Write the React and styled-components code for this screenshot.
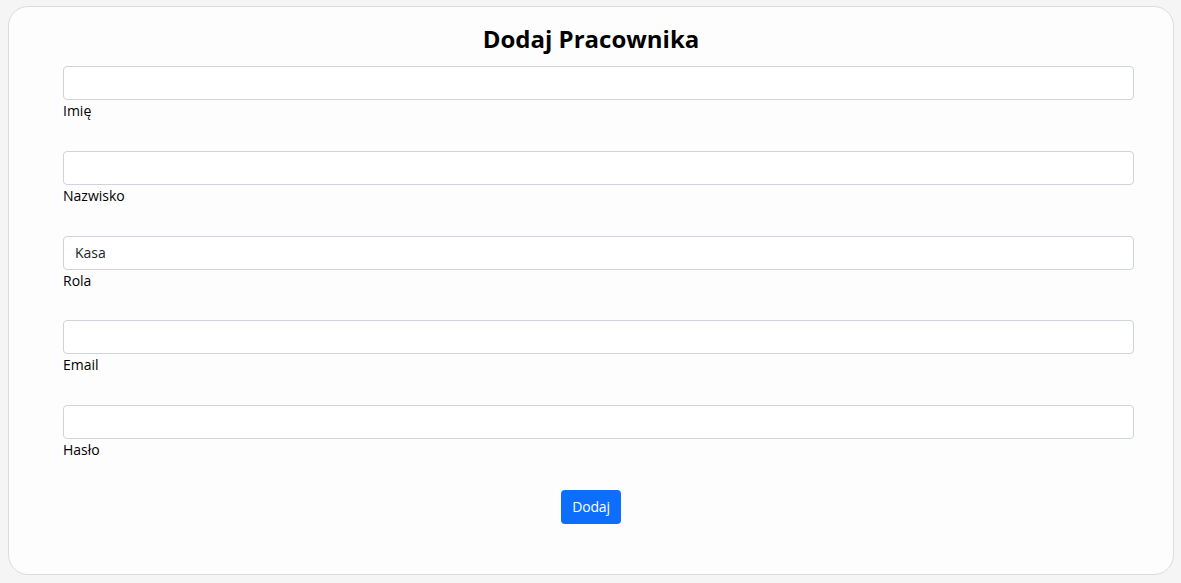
import React from "react";
import { useState } from "react";
import styled, { createGlobalStyle } from "styled-components";

const GlobalStyle = createGlobalStyle`
  body {
    margin: 0;
    background: #f5f5f5;
    font-family: "Open Sans", "Noto Sans", sans-serif;
    color: #212529;
  }
`;

const Page = styled.div`
  padding: 6px 7px 8px 8px;
`;

const Card = styled.div`
  background: #fdfdfd;
  border: 1px solid #dcdcdc;
  border-radius: 20px;
  padding: 17px 0 50px;
  display: flex;
  flex-direction: column;
  align-items: center;
`;

const Title = styled.h2`
  margin: 0 0 13px;
  font-size: 24px;
  line-height: 29px;
  font-weight: 700;
  color: #000;
`;

const Form = styled.form`
  align-self: stretch;
  display: flex;
  flex-direction: column;
  align-items: center;
`;

const Fields = styled.div`
  align-self: stretch;
  padding: 0 39px 0 54px;
`;

const Field = styled.div`
  display: flex;
  flex-direction: column;
  margin-bottom: 29px;
`;

const Input = styled.input`
  height: 34px;
  box-sizing: border-box;
  border: 1px solid #ced4da;
  border-radius: 4px;
  background: #fff;
  padding: 0 11px;
  font-family: inherit;
  font-size: 14px;
  color: #212529;
  outline: none;
`;

const Label = styled.label`
  padding-top: 1px;
  font-size: 14px;
  line-height: 20.75px;
  color: #000;
`;

const SubmitButton = styled.button`
  background: #0d6efd;
  color: #fff;
  border: none;
  border-radius: 4px;
  height: 34px;
  padding: 0 11px;
  font-family: inherit;
  font-size: 14px;
  letter-spacing: -0.2px;
`;

const fields = [
  { name: "imie", label: "Imię" },
  { name: "nazwisko", label: "Nazwisko" },
  { name: "rola", label: "Rola", value: "Kasa" },
  { name: "email", label: "Email" },
  { name: "haslo", label: "Hasło", type: "password" },
];

const App = () => {
  // FORM STATE
  const [values, setValues] = useState(
    Object.fromEntries(fields.map((f) => [f.name, f.value || ""]))
  );

  return (
    <>
      <GlobalStyle />
      <Page>
        <Card>
          <Title>Dodaj Pracownika</Title>
          <Form onSubmit={(e) => e.preventDefault()}>
            <Fields>
              {fields.map((f) => (
                <Field key={f.name}>
                  <Input
                    id={f.name}
                    type={f.type || "text"}
                    value={values[f.name]}
                    onChange={(e) =>
                      setValues({ ...values, [f.name]: e.target.value })
                    }
                  />
                  <Label htmlFor={f.name}>{f.label}</Label>
                </Field>
              ))}
            </Fields>
            <SubmitButton type="submit">Dodaj</SubmitButton>
          </Form>
        </Card>
      </Page>
    </>
  );
};

export default App;
